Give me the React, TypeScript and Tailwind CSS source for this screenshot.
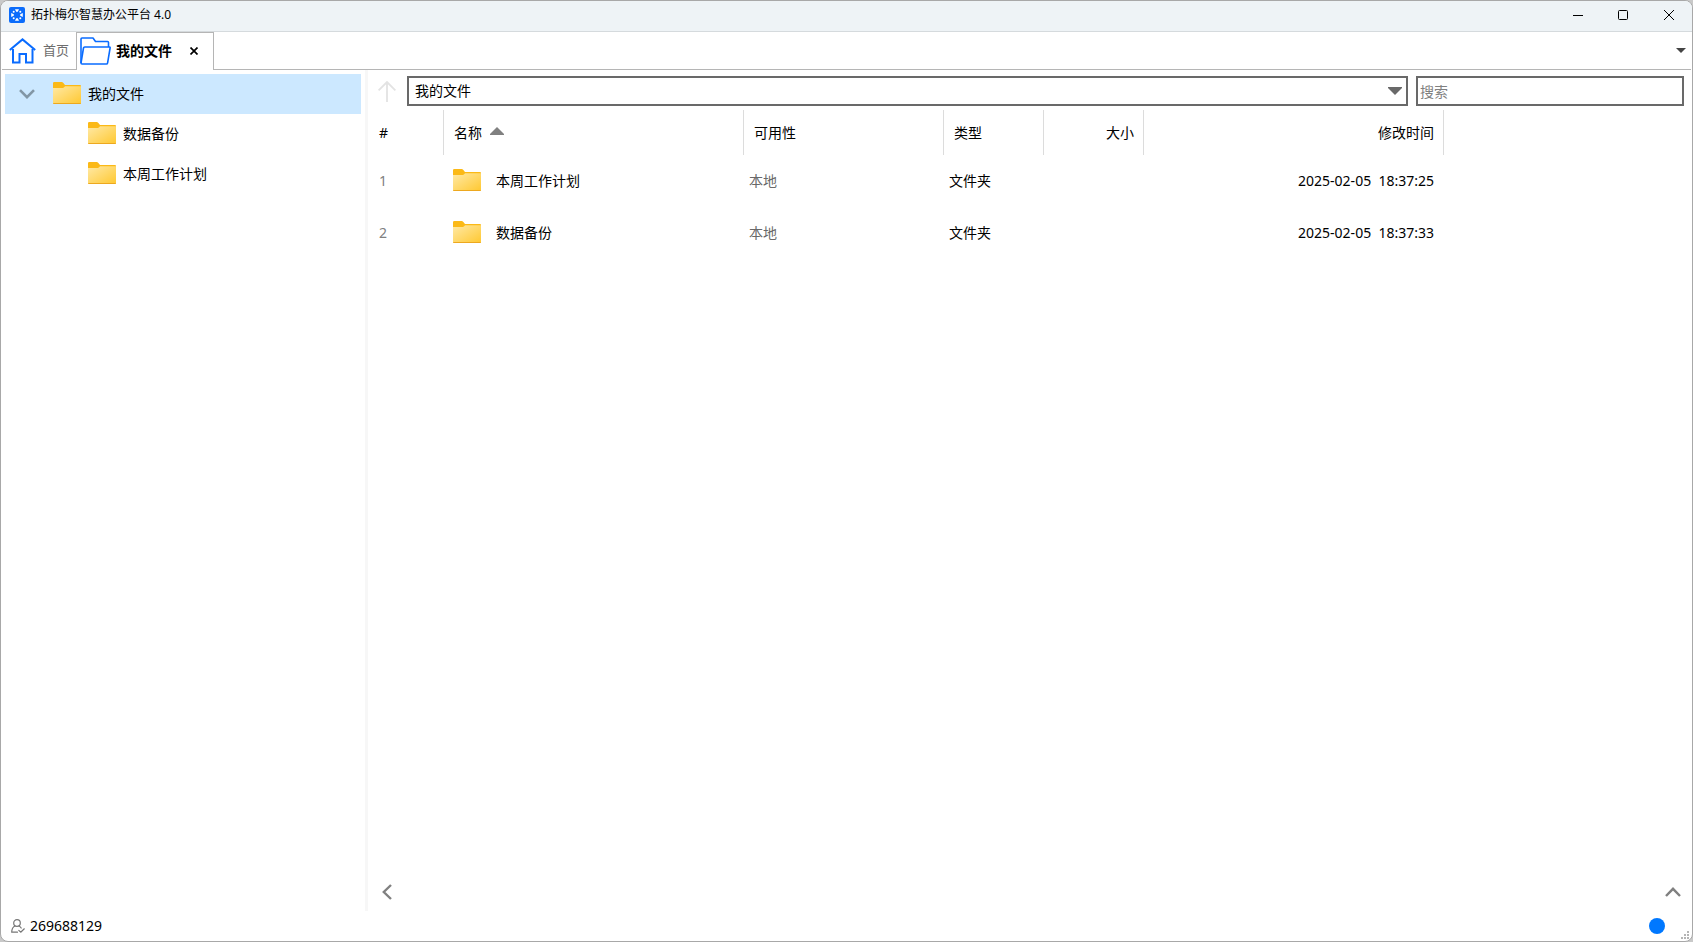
import { useState } from "react";

type FileRow = {
  id: number;
  name: string;
  status: string;
  type: string;
  size: string;
  date: string;
  time: string;
};

const files: FileRow[] = [
  { id: 1, name: "本周工作计划", status: "本地", type: "文件夹", size: "", date: "2025-02-05", time: "18:37:25" },
  { id: 2, name: "数据备份", status: "本地", type: "文件夹", size: "", date: "2025-02-05", time: "18:37:33" },
];

function FolderIcon() {
  return (
    <svg width="28" height="24" viewBox="0 0 28 24" className="shrink-0" aria-hidden="true">
      <defs>
        <linearGradient id="folder" x1="0" y1="0" x2="1" y2="1">
          <stop offset="0" stopColor="#ffe9a6" />
          <stop offset="1" stopColor="#ffc830" />
        </linearGradient>
      </defs>
      <path d="M0 1.2Q0 0 1.2 0H8.5Q9.6 0 10.4 1L12 3H27Q28 3 28 4V8H0Z" fill="#fbb917" />
      <path d="M0 6H9.5Q10.6 6 11.4 5L12 4.2H28V21Q28 22 27 22H1Q0 22 0 21Z" fill="url(#folder)" />
      <path d="M0 21H28Q28 22 27 22H1Q0 22 0 21Z" fill="#eda81f" />
    </svg>
  );
}

function LogoIcon() {
  return (
    <svg width="16" height="16" viewBox="0 0 16 16" className="shrink-0" aria-hidden="true">
      <rect width="16" height="16" rx="2" fill="#0b6cfb" />
      <g fill="#fff">
        <path d="M6 2.2H10L8.8 4.8H7.2ZM6 13.8H10L8.8 11.2H7.2Z" />
        <path d="M2.2 6V10L4.8 8.8V7.2ZM13.8 6V10L11.2 8.8V7.2Z" />
        <circle cx="4.7" cy="4.7" r="1" />
        <circle cx="11.3" cy="4.7" r="1" />
        <circle cx="4.7" cy="11.3" r="1" />
        <circle cx="11.3" cy="11.3" r="1" />
      </g>
    </svg>
  );
}

function TitleBar() {
  return (
    <header className="flex h-[31px] shrink-0 items-center justify-between border-b border-[#d5dadd] bg-[#eef3f6] pb-0.5 pl-2">
      <div className="flex items-center gap-1.5">
        <LogoIcon />
        <h1 className="text-xs">拓扑梅尔智慧办公平台 4.0</h1>
      </div>
      <div className="flex h-full">
        <button aria-label="最小化" className="flex w-[45px] items-center justify-center">
          <svg width="10" height="10" viewBox="0 0 10 10"><path d="M0 5.5H10" stroke="#000" /></svg>
        </button>
        <button aria-label="最大化" className="flex w-[45px] items-center justify-center">
          <svg width="10" height="10" viewBox="0 0 10 10"><rect x="0.5" y="0.5" width="9" height="9" rx="1" fill="none" stroke="#000" /></svg>
        </button>
        <button aria-label="关闭" className="flex w-[47px] items-center justify-center">
          <svg width="10" height="10" viewBox="0 0 10 10"><path d="M0 0L10 10M10 0L0 10" stroke="#000" /></svg>
        </button>
      </div>
    </header>
  );
}

function Tabs() {
  return (
    <nav className="flex h-[38px] shrink-0 px-px">
      <button className="flex w-[74px] items-center gap-[7px] border-b border-[#b5b5b5] pl-[7px] text-[13px] text-[#6d6d6d]">
        <svg width="27" height="26" viewBox="0 0 27 26" fill="none" stroke="#0a6cff" strokeWidth="2" aria-hidden="true">
          <path d="M0.8 12L13.5 1.4L26.2 12" />
          <path d="M4 11V24.5H10.5V16H17V24.5H23.5V11" />
        </svg>
        首页
      </button>
      <div className="flex w-[138px] items-center border-x border-t border-[#b5b5b5] pb-px pl-[3px]">
        <button className="flex items-center gap-[5px] text-sm font-bold">
          <svg width="31" height="28" viewBox="0 0 31 28" fill="none" stroke="#0a6cff" strokeWidth="1.6" strokeLinejoin="round" aria-hidden="true">
            <path d="M1 26V2Q1 1 2 1H13L15.5 4.5H27.5Q28.5 4.5 28.5 5.5V10" />
            <path d="M1 26L3.5 11Q3.7 10 4.7 10H29.5Q30.3 10 30.1 11L27.6 25.8Q27.4 27 26.4 27H2Q1 27 1 26Z" />
          </svg>
          我的文件
        </button>
        <button aria-label="关闭标签" className="ml-[18px]">
          <svg width="8" height="8" viewBox="0 0 8 8"><path d="M0.5 0.5L7.5 7.5M7.5 0.5L0.5 7.5" stroke="#000" strokeWidth="1.7" /></svg>
        </button>
      </div>
      <div className="flex flex-1 items-center justify-end border-b border-[#b5b5b5] pr-[5px]">
        <button aria-label="标签列表">
          <svg width="10" height="5" viewBox="0 0 10 5"><path d="M0 0H10L5 5Z" fill="#444" /></svg>
        </button>
      </div>
    </nav>
  );
}

function Sidebar() {
  return (
    <aside className="w-[364px] shrink-0 pt-1 pr-1 pl-1 text-sm">
      <button aria-expanded="true" className="flex h-10 w-full items-center gap-[7px] bg-[#cce8ff] pl-[14px]">
        <svg width="16" height="10" viewBox="0 0 16 10" fill="none" stroke="#8296a5" strokeWidth="2.6" aria-hidden="true">
          <path d="M1 1.2L8 8.2L15 1.2" />
        </svg>
        <span className="ml-[11px]"><FolderIcon /></span>
        我的文件
      </button>
      <button className="flex h-10 w-full items-center gap-[7px] pl-[83px]">
        <FolderIcon />
        数据备份
      </button>
      <button className="flex h-10 w-full items-center gap-[7px] pl-[83px]">
        <FolderIcon />
        本周工作计划
      </button>
    </aside>
  );
}

function Toolbar() {
  const [query, setQuery] = useState("");

  return (
    <div className="flex h-[30px] items-center gap-2 pr-2">
      <button aria-label="上一级" className="flex w-[31px] justify-end pr-[3px]" disabled>
        <svg width="18" height="21" viewBox="0 0 18 21" fill="none" stroke="#e3e3e3" strokeWidth="1.8">
          <path d="M9 21V1M0.6 9.4L9 1L17.4 9.4" />
        </svg>
      </button>
      <div className="relative h-full flex-1">
        <select aria-label="路径" className="h-full w-full appearance-none border-2 border-[#696969] bg-white px-1.5 text-sm outline-none">
          <option>我的文件</option>
        </select>
        <svg width="14" height="8" viewBox="0 0 14 8" className="pointer-events-none absolute top-[11px] right-1.5">
          <path d="M0 0H14V1L7 8L0 1Z" fill="#696969" />
        </svg>
      </div>
      <input
        aria-label="搜索"
        placeholder="搜索"
        value={query}
        onChange={(e) => setQuery(e.target.value)}
        className="h-full w-[268px] border-2 border-[#696969] px-0.5 text-sm outline-none placeholder:text-[#808080]"
      />
    </div>
  );
}

function FileTable() {
  const head = "border-r border-[#dcdcdc] font-normal";

  return (
    <table className="mt-1 w-[1076px] table-fixed border-separate border-spacing-0 text-left text-sm">
      <thead>
        <tr className="h-[45px]">
          <th className={`${head} w-[76px] pl-[11px]`}>#</th>
          <th className={`${head} w-[300px] pl-2.5`}>
            <span className="flex items-center gap-2">
              名称
              <svg width="14" height="8" viewBox="0 0 14 8" className="mb-1"><path d="M7 0L14 7V8H0V7Z" fill="#808080" /></svg>
            </span>
          </th>
          <th className={`${head} w-[200px] pl-2.5`}>可用性</th>
          <th className={`${head} w-[100px] pl-2.5`}>类型</th>
          <th className={`${head} w-[100px] pr-[9px] text-right`}>大小</th>
          <th className={`${head} w-[300px] pr-[9px] text-right`}>修改时间</th>
        </tr>
      </thead>
      <tbody>
        {files.map((file) => (
          <tr key={file.id} className="h-[52px]">
            <td className="pl-[11px] text-[#808080]">{file.id}</td>
            <td className="pl-[9px]">
              <span className="flex items-center gap-[15px]">
                <FolderIcon />
                {file.name}
              </span>
            </td>
            <td className="pl-[5px] text-[#696969]">{file.status}</td>
            <td className="pl-[5px]">{file.type}</td>
            <td className="pr-2.5 text-right">{file.size}</td>
            <td className="pr-2.5 text-right">{file.date}&nbsp;&nbsp;{file.time}</td>
          </tr>
        ))}
      </tbody>
    </table>
  );
}

function StatusBar() {
  return (
    <footer className="relative flex h-[30px] shrink-0 items-center justify-between pr-[27px] pl-2.5 text-sm">
      <div className="flex items-center gap-[5px]">
        <svg width="14" height="15" viewBox="0 0 14 15" fill="none" stroke="#777" strokeWidth="1.2" strokeLinecap="round" strokeLinejoin="round" aria-hidden="true">
          <circle cx="6" cy="4" r="3.3" />
          <path d="M4 7Q0.8 8.5 0.7 13.2H6.5M8 7Q9.4 7.6 10.2 9" />
          <path d="M7.8 11.3L9.7 13.2L13.3 9.8" />
        </svg>
        269688129
      </div>
      <span className="size-4 rounded-full bg-[#0078ff]" />
      <svg width="8" height="8" viewBox="0 0 8 8" fill="#b5b5b5" className="absolute right-[3px] bottom-0.5" aria-hidden="true">
        <path d="M6 0h2v2H6zM3 3h2v2H3zM6 3h2v2H6zM0 6h2v2H0zM3 6h2v2H3zM6 6h2v2H6z" />
      </svg>
    </footer>
  );
}

export default function App() {
  return (
    <div className="flex min-h-screen bg-[#c9c9c9] font-['Noto_Sans','Noto_Sans_CJK_SC',sans-serif] text-black">
      <div className="flex flex-1 flex-col overflow-hidden rounded-lg border border-[#a8a8a8] bg-white">
        <TitleBar />
        <Tabs />
        <div className="flex flex-1">
          <Sidebar />
          <main className="flex min-w-0 flex-1 flex-col border-l-3 border-[#f7f7f7] pt-1.5">
            <Toolbar />
            <FileTable />
            <div className="mt-auto flex items-center justify-between pr-[11px] pb-[11px] pl-[14px]">
              <button aria-label="收起侧栏">
                <svg width="10" height="16" viewBox="0 0 10 16" fill="none" stroke="#808080" strokeWidth="2.4"><path d="M9 1L1.8 8L9 15" /></svg>
              </button>
              <button aria-label="展开详情">
                <svg width="16" height="10" viewBox="0 0 16 10" fill="none" stroke="#808080" strokeWidth="2.4"><path d="M1 9L8 1.8L15 9" /></svg>
              </button>
            </div>
          </main>
        </div>
        <StatusBar />
      </div>
    </div>
  );
}
